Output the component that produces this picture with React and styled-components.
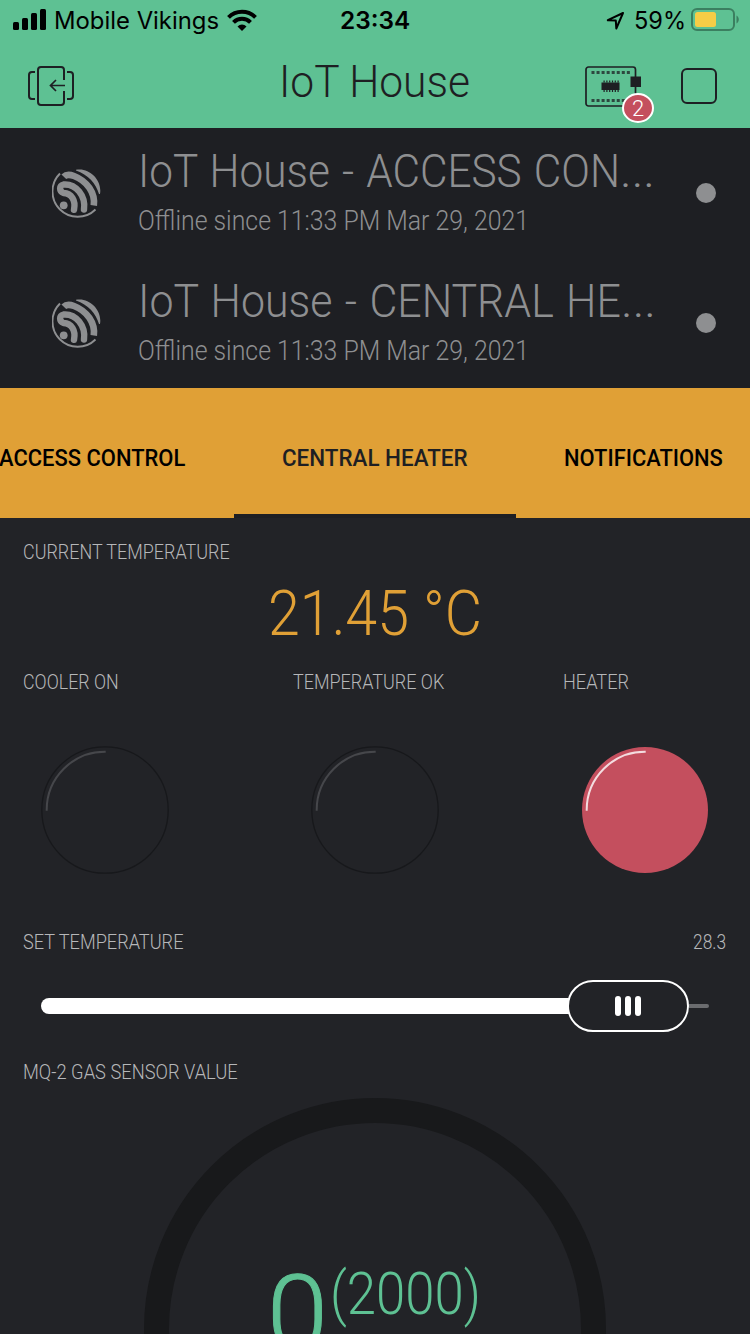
import React, { useLayoutEffect, useRef, useState } from "react";
import styled, { createGlobalStyle } from "styled-components";

const green = "#5ec193";
const orange = "#e0a036";
const red = "#c44f5e";
const ink = "#1e1f23";
const panel = "#222327";
const muted = "#8e8f91";

const GlobalStyle = createGlobalStyle`
  * { box-sizing: border-box; }
  body { margin: 0; background: ${panel}; }
`;

const Screen = styled.main`
  width: 750px;
  height: 1334px;
  overflow: hidden;
  background: ${panel};
  font-family: Roboto, "Liberation Sans", sans-serif;
  font-weight: 300;
  display: flex;
  flex-direction: column;
`;

/* Text condensed horizontally so that it fills a given width. */
const FitBox = styled.span`
  display: block;
  width: ${(p) => p.$width}px;
  white-space: nowrap;
  flex: none;
`;
const FitInner = styled.span`
  display: inline-block;
  transform-origin: 0 50%;
`;
function Fit({ width, children }) {
  const ref = useRef(null);
  const [scale, setScale] = useState(1);
  useLayoutEffect(() => {
    setScale(width / ref.current.offsetWidth);
  }, [width, children]);
  return (
    <FitBox $width={width}>
      <FitInner ref={ref} style={{ transform: `scaleX(${scale})` }}>{children}</FitInner>
    </FitBox>
  );
}

const Header = styled.header`
  height: 128px;
  flex: none;
  background: ${green};
  color: ${ink};
`;
const StatusBar = styled.div`
  height: 40px;
  display: grid;
  grid-template-columns: 1fr auto 1fr;
  padding: 0 11px 0 13px;
  font: 400 24px/42px Inter, sans-serif;
  color: #000;
`;
const StatusGroup = styled.div`
  display: flex;
  align-items: flex-start;
  justify-content: ${(p) => (p.$end ? "flex-end" : "flex-start")};
`;
const Signal = styled.svg`
  margin: 9px 8px 0 0;
`;
const Wifi = styled.svg`
  margin: 9px 0 0 8px;
`;
const Location = styled.svg`
  margin: 11px 9px 0 0;
`;
const Battery = styled.svg`
  margin: 8px 0 0 5px;
`;
const Clock = styled.div`
  font-weight: 600;
  margin-right: 2px;
`;
const NavBar = styled.div`
  height: 88px;
  display: grid;
  grid-template-columns: 1fr auto 1fr;
  padding: 0 33px 0 27px;
`;
const NavTitle = styled.h1`
  margin: 0;
  padding-left: 4px;
  font-size: 45px;
  font-weight: 300;
  line-height: 84px;
`;
const NavSide = styled.div`
  display: flex;
  justify-content: ${(p) => (p.$end ? "flex-end" : "flex-start")};
  padding-top: 25px;
  gap: 26px;
`;

const DeviceList = styled.section`
  background: ${ink};
  color: ${muted};
  flex: none;
`;
const DeviceRow = styled.div`
  height: 130px;
  display: flex;
  align-items: center;
  padding: 0 34px 0 52px;
`;
const DeviceInfo = styled.div`
  height: 130px;
  flex: 1;
  padding: 16px 0 0 37px;
`;
const DeviceName = styled.div`
  display: flex;
  font-size: 46px;
  line-height: 54px;
  word-spacing: 2px;
`;
const DeviceState = styled.div`
  font-size: 27px;
  line-height: 46px;
`;
const StatusDot = styled.span`
  width: 20px;
  height: 20px;
  border-radius: 50%;
  background: ${muted};
`;

const TabBar = styled.nav`
  height: 130px;
  flex: none;
  display: flex;
  background: ${orange};
  overflow: hidden;
`;
const Tab = styled.div`
  flex: none;
  width: ${(p) => p.$width}px;
  margin-left: ${(p) => p.$shift || 0}px;
  padding: 11px 0 0 48px;
  font-size: 23px;
  font-weight: 500;
  line-height: 120px;
  color: ${(p) => (p.$active ? ink : "#000")};
  box-shadow: ${(p) => (p.$active ? `inset 0 -4px ${ink}` : "none")};
`;

const Widget = styled.section`
  height: ${(p) => p.$height || 130}px;
  flex: none;
`;
const WidgetHead = styled.div`
  display: flex;
  justify-content: space-between;
  padding: 20px 24px 0 23px;
  font-size: 19.5px;
  line-height: 29px;
  height: 48px;
  color: #b6b7b9;
`;
const Reading = styled.div`
  display: flex;
  justify-content: center;
  padding-top: 16px;
  font-size: 63px;
  line-height: 63px;
  color: ${orange};
`;
const LedRow = styled.div`
  display: grid;
  grid-template-columns: 270px 270px 210px;
`;
const LedLight = styled.svg`
  display: block;
  margin: 50px 0 0 41px;
`;

const Slider = styled.div`
  display: flex;
  align-items: center;
  height: 52px;
  margin: 24px 41px 0;
`;
const SliderFill = styled.div`
  width: 528px;
  height: 16px;
  border-radius: 8px 0 0 8px;
  background: #fff;
`;
const SliderHandle = styled.div`
  width: 122px;
  height: 52px;
  margin-left: -2px;
  border: 2px solid #fff;
  border-radius: 26px;
  display: flex;
  align-items: center;
  justify-content: center;
  gap: 4px;
`;
const Grip = styled.span`
  width: 6px;
  height: 20px;
  border-radius: 3px;
  background: #fff;
`;
const SliderRest = styled.div`
  flex: 1;
  height: 4px;
  border-radius: 0 2px 2px 0;
  background: #6b6c6f;
`;

const Gauge = styled.div`
  position: relative;
  height: 248px;
  overflow: hidden;
`;
const GaugeArc = styled.svg`
  display: block;
  margin: 12px auto 0;
`;
const GaugeText = styled.div`
  position: absolute;
  left: 267px;
  top: 172px;
  display: flex;
  align-items: flex-start;
  gap: 2px;
  color: ${green};
`;
const GaugeValue = styled.span`
  font-size: 106px;
  line-height: 106px;
  margin-top: 3px;
  -webkit-text-stroke: 1px ${green};
`;
const GaugeMax = styled.span`
  font-size: 60px;
  line-height: 60px;
  margin-top: 6px;
`;

function ExitIcon() {
  return (
    <svg width="48" height="42" viewBox="0 0 48 42" fill="none" stroke={ink} strokeWidth="2">
      <path d="M37 15V5a3 3 0 0 0-3-3H14a3 3 0 0 0-3 3v32a3 3 0 0 0 3 3h20a3 3 0 0 0 3-3V26" />
      <path d="M8 7H5a3 3 0 0 0-3 3v21a3 3 0 0 0 3 3h3M40 7h3a3 3 0 0 1 3 3v21a3 3 0 0 1-3 3h-3" />
      <path d="M38 20.500H24M29 15l-5.500 5.500L29 26" strokeWidth="1.700" />
    </svg>
  );
}

const BoardWrap = styled.div`
  position: relative;
  width: 70px;
  height: 60px;
`;
const Badge = styled.span`
  position: absolute;
  left: 37px;
  top: 28px;
  width: 32px;
  height: 30px;
  border: 2px solid #fff;
  border-radius: 50%;
  background: ${red};
  color: #fff;
  font-size: 22px;
  line-height: 27px;
  text-align: center;
`;
function BoardIcon() {
  return (
    <BoardWrap>
      <svg width="60" height="42" viewBox="0 0 60 42" fill="none" stroke={ink}>
        <rect x="1" y="2" width="49.500" height="39" rx="2.500" strokeWidth="1.700" />
        <path d="M6.500 7.500H46M6.500 35.500H46" strokeWidth="3" strokeDasharray="3 2.050" opacity=".75" />
        <path d="M18.500 16.500H34M18.500 26H34" strokeWidth="2" strokeDasharray="1.200 1.600" />
        <rect x="16.500" y="17.500" width="18" height="7.500" fill={ink} stroke="none" />
        <rect x="45.500" y="11.500" width="10.500" height="10.500" fill={ink} stroke="none" />
      </svg>
      <Badge>2</Badge>
    </BoardWrap>
  );
}

const StopIcon = styled.span`
  width: 36px;
  height: 36px;
  margin-top: 3px;
  border: 2px solid ${ink};
  border-radius: 6px;
`;

function EspressifIcon() {
  return (
    <svg width="49" height="49" viewBox="0 0 49 49" fill="none" stroke="currentColor">
      <path d="M8 4.500A23.300 23.300 0 1 0 43.500 40.500" strokeWidth="1.900" />
      <circle cx="11.700" cy="36.300" r="3.900" fill="currentColor" stroke="none" />
      <path d="M32 40.500C34 27 24 14.500 11.500 15.500C7 16.500 7 22.500 11.500 24C19.500 24.500 24 31 22 40.800" strokeWidth="6.400" strokeLinecap="round" strokeLinejoin="round" />
      <path d="M11.800 7.800C14 5.500 18 5.500 22 7C35 12 43.500 24 41.800 36.500" strokeWidth="6.600" />
      <path d="M24 .8C37 -2 50.500 11 48 25H47C44 14.500 36 5.500 24 1.500z" fill="currentColor" stroke="none" />
    </svg>
  );
}

function Device({ name, width }) {
  return (
    <DeviceRow>
      <EspressifIcon />
      <DeviceInfo>
        <DeviceName><Fit width={width}>{name}</Fit><Fit width={35}>...</Fit></DeviceName>
        <DeviceState><Fit width={391}>Offline since 11:33 PM Mar 29, 2021</Fit></DeviceState>
      </DeviceInfo>
      <StatusDot />
    </DeviceRow>
  );
}

function Led({ label, width, on }) {
  return (
    <div>
      <WidgetHead><Fit width={width}>{label}</Fit></WidgetHead>
      <LedLight width="128" height="128" viewBox="0 0 128 128" fill="none">
        <circle cx="64" cy="64" r={on ? 63 : 63.2} fill={on ? red : "none"} stroke={on ? "none" : "#17181b"} strokeWidth="1.300" />
        <path d="M5.700 64.700V64A58.300 58.300 0 0 1 64 5.700h.7" stroke={on ? "#f3dcdf" : "#46474b"} strokeWidth="2" />
      </LedLight>
    </div>
  );
}

export default function App() {
  return (
    <Screen>
      <GlobalStyle />
      <Header>
        <StatusBar>
          <StatusGroup>
            <Signal width="33" height="21" viewBox="0 0 33 21">
              <rect x="0" y="13" width="6" height="8" rx="1.500" />
              <rect x="9" y="9" width="6" height="12" rx="1.500" />
              <rect x="18" y="4" width="6" height="17" rx="1.500" />
              <rect x="27" y="0" width="6" height="21" rx="1.500" />
            </Signal>
            <Fit width={165}>Mobile Vikings</Fit>
            <Wifi width="30" height="22" viewBox="0 0 30 22" fill="none" stroke="#000" strokeWidth="4">
              <path d="M1.500 8.400a19 19 0 0 1 27 0" />
              <path d="M6.500 13.400a12 12 0 0 1 17 0" />
              <path d="M15 22l-4.500-4.600a6.400 6.400 0 0 1 9 0z" fill="#000" stroke="none" />
            </Wifi>
          </StatusGroup>
          <Clock><Fit width={70}>23:34</Fit></Clock>
          <StatusGroup $end>
            <Location width="19" height="19" viewBox="0 0 19 19" fill="none" stroke="#000" strokeWidth="2" strokeLinejoin="round">
              <path d="M17 2L1.800 9.200l8 .3.500 8z" />
            </Location>
            <Fit width={52}>59%</Fit>
            <Battery width="48" height="23" viewBox="0 0 48 23">
              <rect x="1" y="1" width="42" height="21" rx="5" fill="none" stroke="#3b7f60" strokeWidth="2" />
              <rect x="4" y="4" width="21" height="15" rx="2.500" fill="#f7cd46" />
              <path d="M45.500 7.500c3 1.500 3 6.500 0 8z" fill="#3b7f60" />
            </Battery>
          </StatusGroup>
        </StatusBar>
        <NavBar>
          <NavSide><ExitIcon /></NavSide>
          <NavTitle><Fit width={191}>IoT House</Fit></NavTitle>
          <NavSide $end><BoardIcon /><StopIcon /></NavSide>
        </NavBar>
      </Header>

      <DeviceList>
        <Device name="IoT House - ACCESS CON" width={482} />
        <Device name="IoT House - CENTRAL HE" width={483} />
      </DeviceList>

      <TabBar>
        <Tab $width={282} $shift={-49}><Fit width={186}>ACCESS CONTROL</Fit></Tab>
        <Tab $width={282} $shift={1} $active><Fit width={186}>CENTRAL HEATER</Fit></Tab>
        <Tab $width={282}><Fit width={159}>NOTIFICATIONS</Fit></Tab>
      </TabBar>

      <Widget>
        <WidgetHead><Fit width={207}>CURRENT TEMPERATURE</Fit></WidgetHead>
        <Reading><Fit width={214}>21.45 °C</Fit></Reading>
      </Widget>

      <Widget $height={260}>
        <LedRow>
          <Led label="COOLER ON" width={96} />
          <Led label="TEMPERATURE OK" width={151} />
          <Led label="HEATER" width={66} on />
        </LedRow>
      </Widget>

      <Widget>
        <WidgetHead>
          <Fit width={160}>SET TEMPERATURE</Fit>
          <Fit width={33}>28.3</Fit>
        </WidgetHead>
        <Slider>
          <SliderFill />
          <SliderHandle><Grip /><Grip /><Grip /></SliderHandle>
          <SliderRest />
        </Slider>
      </Widget>

      <Widget $height={296}>
        <WidgetHead><Fit width={215}>MQ-2 GAS SENSOR VALUE</Fit></WidgetHead>
        <Gauge>
          <GaugeArc width="462" height="236" viewBox="0 0 462 236" fill="none">
            <circle cx="231" cy="231" r="218.500" stroke="#18191b" strokeWidth="25" />
          </GaugeArc>
          <GaugeText>
            <GaugeValue><Fit width={61}>0</Fit></GaugeValue>
            <GaugeMax><Fit width={151}>(2000)</Fit></GaugeMax>
          </GaugeText>
        </Gauge>
      </Widget>
    </Screen>
  );
}
